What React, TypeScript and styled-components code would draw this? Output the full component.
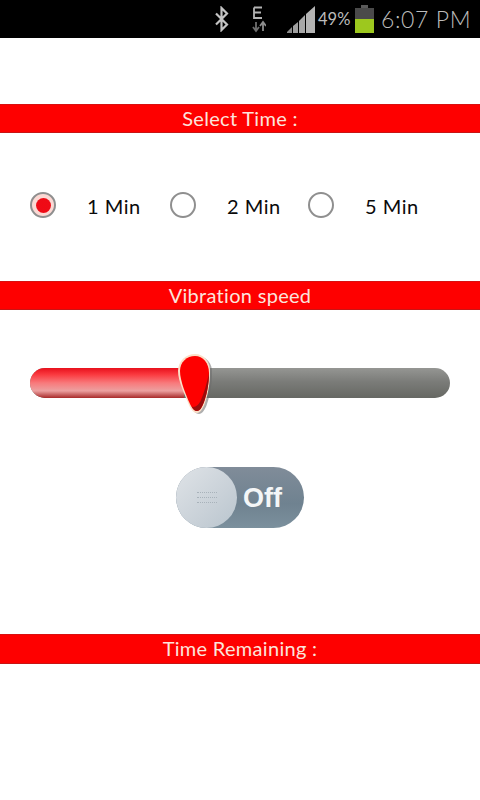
import React from 'react';
import styled, { createGlobalStyle } from 'styled-components';

const GlobalStyle = createGlobalStyle`
  html, body {
    margin: 0;
    padding: 0;
    background: #fff;
  }
`;

const Page = styled.div`
  width: 480px;
  height: 800px;
  overflow: hidden;
  background: #fff;
  font-family: "Lato", "Liberation Sans", sans-serif;
`;

const StatusBar = styled.div`
  height: 38px;
  background: #000;
  display: flex;
  align-items: center;
  color: #bcbcbc;
  padding-left: 213px;
`;

const BluetoothIcon = styled.svg`
  width: 18px;
  height: 26px;
`;

const DataIcon = styled.svg`
  width: 14px;
  height: 28px;
  margin-left: 21px;
`;

const SignalIcon = styled.svg`
  width: 29px;
  height: 27px;
  margin-left: 21px;
`;

const Percent = styled.span`
  font-size: 16.5px;
  font-weight: 400;
  margin-left: 2px;
  width: 37px;
`;

const BatteryIcon = styled.svg`
  width: 19px;
  height: 28px;
`;

const Clock = styled.span`
  font-size: 23px;
  font-weight: 300;
  margin-left: 7px;
  letter-spacing: 0.6px;
  white-space: nowrap;
`;

const Banner = styled.div<{ $top: number; $tall?: boolean }>`
  margin-top: ${props => props.$top}px;
  height: ${props => (props.$tall ? 30 : 29)}px;
  background: #fe0000;
  border-top: 1px solid #d81010;
  border-bottom: 1px solid #c81414;
  box-sizing: border-box;
  color: #fbe4dc;
  font-size: 20px;
  letter-spacing: 0.3px;
  line-height: 27px;
  text-align: center;
`;

const RadioRow = styled.div`
  margin-top: 47px;
  height: 50px;
  padding-left: 30px;
  display: grid;
  grid-template-columns: 140px 138px auto;
  align-items: center;
`;

const Option = styled.label`
  display: flex;
  align-items: center;
`;

const RadioCircle = styled.span<{ $checked?: boolean }>`
  width: 26px;
  height: 26px;
  box-sizing: border-box;
  border-radius: 50%;
  border: 2px solid #8f8f8f;
  background: ${props => (props.$checked ? '#fbd9d4' : '#fff')};
  display: flex;
  align-items: center;
  justify-content: center;
`;

const RadioDot = styled.span`
  width: 15px;
  height: 15px;
  border-radius: 50%;
  background: radial-gradient(circle, #f00a14 0%, #ee0b16 65%, #f2545a 100%);
`;

const OptionLabel = styled.span`
  margin-left: 31px;
  padding-top: 2px;
  color: #0a0a0a;
  font-size: 20px;
  letter-spacing: 0.5px;
`;

const SliderTrack = styled.div`
  position: relative;
  margin: 58px 30px 0;
  height: 30px;
  border-radius: 15px;
  background: linear-gradient(180deg, #959693 0%, #7b7c79 45%, #666863 100%);
`;

const SliderFill = styled.div`
  height: 100%;
  border-radius: 15px 0 0 15px;
  background: linear-gradient(180deg, #e8101c 0%, #fa3a40 22%, #f87a7c 50%, #eca0a0 76%, #a82a2a 100%);
`;

const SliderThumb = styled.svg`
  position: absolute;
  left: 146px;
  top: -15px;
  width: 38px;
  height: 62px;
`;

const ToggleRow = styled.div`
  margin-top: 69px;
  display: flex;
  justify-content: center;
`;

const Toggle = styled.div`
  width: 128px;
  height: 61px;
  border-radius: 31px;
  background: linear-gradient(180deg, #808c99 0%, #6f8290 60%, #7b909d 100%);
  display: flex;
  align-items: center;
`;

const ToggleKnob = styled.div`
  width: 61px;
  height: 61px;
  border-radius: 50%;
  background: linear-gradient(135deg, #dfe3e7 0%, #c9d1d8 60%, #b9c5ce 100%);
  display: flex;
  flex-direction: column;
  align-items: center;
  justify-content: center;
  gap: 3px;
`;

const KnobLine = styled.span`
  width: 20px;
  height: 1px;
  border-top: 1px dotted #a8b2ba;
`;

const ToggleText = styled.span`
  margin-left: 6px;
  padding-top: 2px;
  color: #f4f6f7;
  font-family: "Liberation Sans", sans-serif;
  font-size: 27px;
  font-weight: 700;
`;

const options = [
  { label: '1 Min', checked: true },
  { label: '2 Min', checked: false },
  { label: '5 Min', checked: false },
];

const App: React.FC = () => (
  <Page>
    <GlobalStyle />
    <StatusBar>
      <BluetoothIcon viewBox="0 0 18 26">
        <path d="M3 7.5 L14 18.5 L8.5 24 V2 L14 7.5 L3 18.5" fill="none" stroke="#c4c4c4" strokeWidth="2.2" />
      </BluetoothIcon>
      <DataIcon viewBox="0 0 14 28">
        <path d="M2 2.5 H10 M2 2.5 V13 H10 M2 7.5 H9" fill="none" stroke="#b4b4b4" strokeWidth="1.8" />
        <path d="M4 17 V25 M1 22 L4 26 L7 22" fill="none" stroke="#6f6f6f" strokeWidth="1.8" />
        <path d="M11 26 V18 M8 21 L11 17 L14 21" fill="none" stroke="#8d8d8d" strokeWidth="1.8" />
      </DataIcon>
      <SignalIcon viewBox="0 0 29 27">
        <polygon points="0,27 5,27 5,21 0,26" fill="#8c8c8c" />
        <polygon points="6,27 11,27 11,16 6,20" fill="#a0a0a0" />
        <polygon points="12,27 18,27 18,9 12,15" fill="#a8a8a8" />
        <polygon points="19,27 28,27 28,0 19,8" fill="#b4b4b4" />
      </SignalIcon>
      <Percent>49%</Percent>
      <BatteryIcon viewBox="0 0 19 28">
        <rect x="6" y="0" width="7" height="3" fill="#5a5a5a" />
        <rect x="0" y="3" width="19" height="11" fill="#4a4a4a" />
        <rect x="0" y="14" width="19" height="14" fill="#9dc81e" />
      </BatteryIcon>
      <Clock>6:07 PM</Clock>
    </StatusBar>

    <Banner $top={66}>Select Time :</Banner>

    <RadioRow>
      {options.map(option => (
        <Option key={option.label}>
          <RadioCircle $checked={option.checked}>{option.checked && <RadioDot />}</RadioCircle>
          <OptionLabel>{option.label}</OptionLabel>
        </Option>
      ))}
    </RadioRow>

    <Banner $top={51}>Vibration speed</Banner>

    <SliderTrack>
      <SliderFill style={{ width: `${(154 / 420) * 100}%` }} />
      <SliderThumb viewBox="0 0 38 62">
        <path d="M4 18 C4 8 10 2 19 2 C28 2 35 9 34 20 C34 30 32 42 29 50 C27 56 24 60 21 60 C18 60 15 57 13 52 C9 42 4 28 4 18 Z" fill="#6c6c6c" opacity="0.55" transform="translate(2 1)" />
        <path d="M2 18 C2 8 10 1 19 1 C28 1 35 9 34 20 C34 30 32 42 29 50 C27 56 24 60 21 60 C18 60 15 57 13 52 C9 42 2 28 2 18 Z" fill="#fbe0c8" />
        <path d="M4 18 C4 9 11 3 19 3 C27 3 33 10 33 20 C33 30 31 41 28 49 C26 54 24 58 21 58 C18 58 16 55 14 51 C10 42 4 28 4 18 Z" fill="#fe0000" />
        <path d="M33 20 C33 30 31 41 28 49 C26 54 24 58 21 58 C18.5 58 17 56 15.5 53.5 C19 55 23 52 25 47 C28 40 31 30 33 20 Z" fill="#9a0c0c" />
      </SliderThumb>
    </SliderTrack>

    <ToggleRow>
      <Toggle>
        <ToggleKnob>
          <KnobLine />
          <KnobLine />
          <KnobLine />
        </ToggleKnob>
        <ToggleText>Off</ToggleText>
      </Toggle>
    </ToggleRow>

    <Banner $top={106} $tall>Time Remaining :</Banner>
  </Page>
);

export default App;
